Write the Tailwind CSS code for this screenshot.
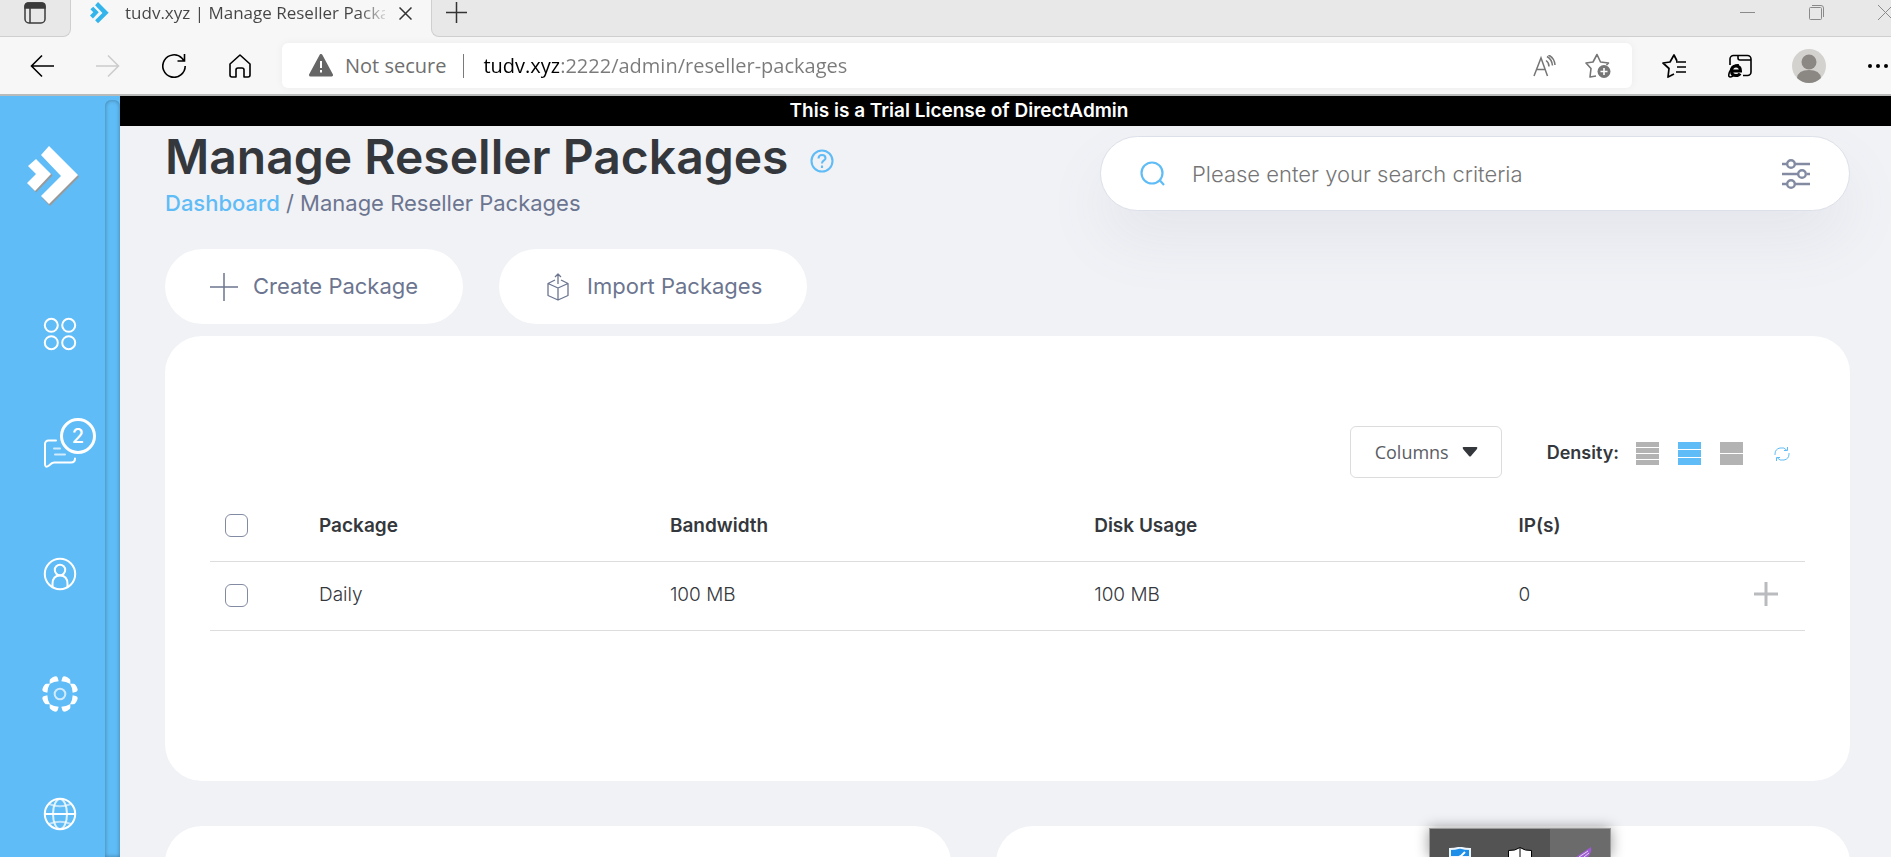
<!DOCTYPE html>
<html lang="en">
<head>
<meta charset="utf-8">
<meta name="viewport" content="width=device-width, initial-scale=1">
<title>tudv.xyz | Manage Reseller Packages</title>
<script src="https://cdn.jsdelivr.net/npm/@tailwindcss/browser@4"></script>
</head>
<body class="relative flex h-screen flex-col overflow-hidden bg-[#f1f2f6] font-['Inter',sans-serif] text-[#34383c]">

<svg class="hidden">
  <symbol id="chevrons" viewBox="0 0 52 60">
    <path d="M22 0 51 29 22 58 14 50 34 30 14 9ZM9 13 24 28 8 45 0 37 9 28 1 20Z"/>
  </symbol>
</svg>

<!-- Browser tabs -->
<header class="flex-none font-['Open_Sans',sans-serif]">
  <div class="flex h-[37px] items-stretch bg-[#f7f7f7]">
    <div class="flex w-[71px] justify-center rounded-br-lg border-r border-b border-[#cfcfcf] bg-[#e8e8e8] pt-[2px]">
      <button aria-label="Tab actions" class="h-[22px]">
        <svg class="size-[22px]" viewBox="0 0 22 22" fill="none" stroke="#3b3b3b" stroke-width="1.5"><rect x="1" y="1" width="20" height="20" rx="4"/><path d="M1 6V4a3 3 0 0 1 3-3h14a3 3 0 0 1 3 3v2Z" fill="#3b3b3b"/><path d="M6 6v15"/></svg>
      </button>
    </div>
    <div class="flex w-[360px] items-start pl-[19px]">
      <svg class="mt-[2px] h-[22px] w-[19px] flex-none" fill="#33b5ec"><use href="#chevrons"/></svg>
      <span class="ml-4 h-[26px] w-[260px] overflow-hidden bg-linear-to-r from-[#444] from-90% to-[#44444430] bg-clip-text text-[17px] leading-[26px] whitespace-nowrap text-transparent">tudv.xyz | Manage Reseller Packages</span>
      <button aria-label="Close tab" class="mt-[7px] ml-[14px]"><svg class="size-[13px]" viewBox="0 0 13 13" stroke="#333" stroke-width="1.5"><path d="m.5.5 12 12m0-12-12 12"/></svg></button>
    </div>
    <div class="flex flex-1 items-start rounded-bl-lg border-b border-l border-[#cfcfcf] bg-[#e8e8e8] pl-[14px]">
      <button aria-label="New tab" class="mt-[2px]"><svg class="size-[21px]" viewBox="0 0 21 21" stroke="#333" stroke-width="1.5"><path d="M10.500 0v21M0 10.500h21"/></svg></button>
      <div class="-mr-[2px] ml-auto flex items-center gap-[54px] pt-[5px]">
        <button aria-label="Minimize"><svg class="size-[15px]" viewBox="0 0 15 15" stroke="#8a8a8a"><path d="M0 7.500h15"/></svg></button>
        <button aria-label="Restore"><svg class="size-[15px]" viewBox="0 0 15 15" stroke="#8a8a8a" fill="none"><rect x=".5" y="2.500" width="12" height="12" rx="1"/><path d="M3 .5h9a2.500 2.500 0 0 1 2.500 2.500v9"/></svg></button>
        <button aria-label="Close window"><svg class="size-[15px]" viewBox="0 0 15 15" stroke="#8a8a8a"><path d="m0 0 15 15m0-15L0 15"/></svg></button>
      </div>
    </div>
  </div>

  <!-- Browser toolbar -->
  <div class="flex h-[59px] items-center border-b-2 border-[#b9bbbb] bg-[#f7f7f7] pl-[30px]">
    <div class="flex w-[252px] flex-none items-center gap-[42px]">
      <button aria-label="Back"><svg class="size-6" viewBox="0 0 24 24" fill="none" stroke="#000" stroke-width="1.6"><path d="M24 12H1.500M12 1.500 1.500 12 12 22.500"/></svg></button>
      <button aria-label="Forward"><svg class="size-6" viewBox="0 0 24 24" fill="none" stroke="#ccc" stroke-width="1.6"><path d="M0 12h22.500M12 1.500 22.500 12 12 22.500"/></svg></button>
      <button aria-label="Refresh"><svg class="size-6" viewBox="0 0 24 24" fill="none" stroke="#000" stroke-width="1.600"><path d="M23.200 12A11.200 11.200 0 1 1 20 4.200l2 2.500M22.500 0v7h-7"/></svg></button>
      <button aria-label="Home"><svg class="size-6" viewBox="0 0 24 24" fill="none" stroke="#000" stroke-width="1.600" stroke-linejoin="round"><path d="M2 10 12 1l10 9v11a2 2 0 0 1-2 2h-4v-7a2 2 0 0 0-2-2h-4a2 2 0 0 0-2 2v7H4a2 2 0 0 1-2-2Z"/></svg></button>
    </div>
    <div class="flex h-[45px] min-w-0 flex-1 items-center rounded-md bg-white pl-[27px] text-[20px] shadow-[0_0_8px_#0000000d]">
      <svg class="h-[23px] w-6 flex-none" viewBox="0 0 24 23"><path d="M12 1.500 22.500 21H1.500Z" fill="#666" stroke="#666" stroke-width="3" stroke-linejoin="round"/><path d="M12 7v7m0 2v2.500" stroke="#fff" stroke-width="2"/></svg>
      <span class="ml-3 flex-none text-[#6f6f6f]">Not secure</span>
      <span class="mr-[19px] ml-[17px] h-6 w-px flex-none bg-[#7a7a7a]"></span>
      <input type="text" aria-label="Address" value="tudv.xyz:2222/admin/reseller-packages" class="min-w-0 flex-1 bg-linear-to-r from-black from-[76px] to-[#7a7a7a] to-[76px] bg-clip-text text-transparent outline-none">
      <button aria-label="Read aloud"><svg class="h-[22px] w-[23px]" viewBox="0 0 23 22" fill="none" stroke="#767676" stroke-width="1.500"><path d="M1 21 8 3l6.500 18M3.500 14.500h9M13 5.500q3 2 3 6M14 1.500q5 3 5.500 9M15.500 0q6 3 6.500 10" /></svg></button>
      <button aria-label="Add to favorites" class="mr-5 ml-[29px]"><svg class="h-[26px] w-[27px]" viewBox="0 0 27 26" fill="none" stroke="#767676" stroke-width="1.600"><path d="m11 23-6 1 1-8.500L1 10l7-1 4-7.500L15.500 9l8 1-2 2" stroke-linejoin="round"/><circle cx="19" cy="18.500" r="6.500" fill="#767676" stroke="none"/><path d="M19 15v7m-3.500-3.500h7" stroke="#fff"/></svg></button>
    </div>
    <div class="flex flex-none items-center pl-[30px]">
      <button aria-label="Favorites"><svg class="h-6 w-[25px]" viewBox="0 0 25 24" fill="none" stroke="#000" stroke-width="1.700" stroke-linejoin="round"><path d="M14 8h10M15 13h9M14 18h10M12 20l-6 3 1-8.500L1 9l7-1 4-7 3 6"/></svg></button>
      <button aria-label="Internet Explorer mode" class="ml-[41px]"><svg class="size-6" viewBox="0 0 24 24" fill="none" stroke="#000" stroke-width="1.600"><path d="M2 11V5a3.500 3.500 0 0 1 3.500-3.500h14A3.500 3.500 0 0 1 23 5v13a3.500 3.500 0 0 1-3.500 3.500H15M10 1.500V4q0 2 2 2h11"/><path d="M4 17h8.500q0-5-4.500-5t-4.500 5q0 4.500 4.500 4.500 3 0 4-2" stroke-width="3"/><path d="M11 11Q5 10 1.500 18-1 25 5 22"/></svg></button>
      <button aria-label="Profile" class="ml-[40px]"><svg class="size-[34px]" viewBox="0 0 34 34"><circle cx="17" cy="17" r="17" fill="#d4d2cf"/><circle cx="17" cy="13" r="7.500" fill="#8b8783"/><path d="M5 29q1-8 12-8t12 8a17 17 0 0 1-24 0Z" fill="#8b8783"/></svg></button>
      <button aria-label="Settings and more" class="ml-[41px]"><svg class="h-5 w-[24px]" viewBox="0 0 24 20"><circle cx="3" cy="10" r="2"/><circle cx="11" cy="10" r="2"/><circle cx="19" cy="10" r="2"/></svg></button>
    </div>
  </div>
</header>

<div class="flex min-h-0 flex-1">
  <!-- Sidebar -->
  <aside class="flex w-[120px] flex-none bg-[#60bcf6] text-white">
    <nav class="flex w-[105px] flex-col items-start overflow-hidden pt-[50px]">
      <a href="#" aria-label="DirectAdmin" class="ml-[27px]">
        <svg class="h-[60px] w-[52px]" viewBox="0 0 52 60"><path fill="#999" d="m50 28 2 3-29 29-8-8 8-2ZM23.500 27l2 2.500L9 46.500 2 39Z"/><use href="#chevrons" fill="#fff"/></svg>
      </a>
      <div class="ml-[42px] flex flex-col gap-[84px] pt-[110px]">
        <a href="#" aria-label="Menu"><svg class="size-9" viewBox="0 0 36 36" fill="none" stroke="currentColor" stroke-width="2"><circle cx="9.300" cy="9.300" r="6.500"/><circle cx="26.700" cy="9.300" r="6.500"/><circle cx="9.300" cy="26.700" r="6.500"/><circle cx="26.700" cy="26.700" r="6.500"/></svg></a>
        <a href="#" aria-label="Messages, 2 unread" class="relative">
          <svg class="size-9" viewBox="0 0 36 36" fill="none" stroke="currentColor" stroke-width="2" stroke-linecap="round"><path d="M14 4.500H6.500A3.500 3.500 0 0 0 3 8v20q0 4.500 4 1.500 3-3 5-3h17q4 0 4-4"/><path d="M12 12.500h6M13 18.500h10" opacity=".7"/></svg>
          <span class="absolute -top-[18px] left-[18px] flex size-9 items-center justify-center rounded-full border-[3px] border-white bg-[#60bcf6] text-[20px] font-medium">2</span>
        </a>
        <a href="#" aria-label="Account"><svg class="size-9" viewBox="0 0 36 36" fill="none" stroke="currentColor" stroke-width="2"><circle cx="18" cy="18" r="15.200"/><circle cx="18" cy="14" r="5.200"/><path d="M10.500 31v-3q0-8.500 7.500-8.500t7.500 8.500v3"/></svg></a>
        <a href="#" aria-label="Settings"><svg class="size-9" viewBox="-54 -54 108 108" fill="currentColor">
          <g id="cog-quarter"><path d="M4-38 7-49Q8-52 12-53 16-53 22-50L28-46Q31-44 31-40V-30Q18-38 4-38Z"/><path transform="matrix(0 -1 -1 0 0 0)" d="M4-38 7-49Q8-52 12-53 16-53 22-50L28-46Q31-44 31-40V-30Q18-38 4-38Z"/></g>
          <use href="#cog-quarter" transform="rotate(90)"/><use href="#cog-quarter" transform="rotate(180)"/><use href="#cog-quarter" transform="rotate(270)"/>
          <circle r="16" fill="none" stroke="currentColor" stroke-width="6" opacity=".7"/></svg></a>
        <a href="#" aria-label="Language"><svg class="size-9" viewBox="0 0 36 36" fill="none" stroke="currentColor" stroke-width="2"><circle cx="18" cy="18" r="15.200"/><path d="M3 18h30"/><ellipse cx="18" cy="18" rx="7" ry="15" opacity=".8"/><path d="M7 8q11 4.500 22 0M7 28q11-4.500 22 0" opacity=".6"/></svg></a>
      </div>
    </nav>
    <div class="mt-1 flex-1 rounded-t-md shadow-[inset_0_0_4px_#00000059]"></div>
  </aside>

  <main class="flex min-w-0 flex-1 flex-col overflow-hidden">
    <p class="h-[30px] flex-none bg-black pr-[93px] text-center text-[19px] leading-[30px] font-semibold text-white">This is a Trial License of DirectAdmin</p>

    <div class="flex flex-col pr-[41px] pl-[45px]">
      <div class="flex items-start justify-between">
        <div>
          <div class="flex items-center gap-[22px]">
            <h1 class="text-[48px] leading-[62px] font-semibold">Manage Reseller Packages</h1>
            <button aria-label="Help" class="mt-2"><svg class="size-6" viewBox="0 0 24 24" fill="none" stroke="#60bcf6" stroke-width="2.100"><circle cx="12" cy="12" r="10.500"/><path d="M8.500 9.500q0-3.500 3.500-3.500t3.500 3.200c0 2.300-3.500 2.300-3.500 5.300"/><path d="M12 16.500V19"/></svg></button>
          </div>
          <nav aria-label="Breadcrumb" class="text-[22px] leading-[30px] text-[#6c7590]"><a href="#" class="font-medium text-[#60bcf6]">Dashboard</a> / Manage Reseller Packages</nav>
        </div>
        <form class="mt-[10px] flex h-[75px] w-[750px] items-center rounded-full border border-[#dce0e9] bg-white pr-[38px] pl-[39px] shadow-[0_30px_60px_#6c759017]">
          <svg class="h-[26px] w-[25px] flex-none" viewBox="0 0 25 26" fill="none" stroke="#60bcf6" stroke-width="2.200"><circle cx="12" cy="12" r="10.500"/><path d="m19.500 19 4.500 5"/></svg>
          <input type="text" aria-label="Search" placeholder="Please enter your search criteria" class="ml-[27px] h-10 min-w-0 flex-1 text-[22px] font-light outline-none placeholder:text-[#757575]">
          <button type="button" aria-label="Search filters"><svg class="block size-[30px]" viewBox="0 0 30 30" fill="none" stroke="#838ba3" stroke-width="2.400"><path d="M1 5h5m8 0h15M1 15h16m9 0h3M1 25h5m8 0h15"/><circle cx="10" cy="5" r="3.800"/><circle cx="21" cy="15" r="3.800"/><circle cx="10" cy="25" r="3.800"/></svg></button>
        </form>
      </div>

      <div class="mt-[31px] flex gap-9 text-[22px] text-[#6c7590]">
        <button class="flex h-[75px] items-center gap-[15px] rounded-full bg-white px-[45px]"><svg class="size-7" viewBox="0 0 28 28" stroke="currentColor" stroke-width="1.500"><path d="M14 0v28M0 14h28"/></svg>Create Package</button>
        <button class="flex h-[75px] items-center gap-[15px] rounded-full bg-white px-[45px]"><svg class="size-7" viewBox="0 0 28 28" fill="none" stroke="currentColor" stroke-width="1.300" stroke-linejoin="round"><path d="M11 7 4 10.500v12L14 27l10-4.500v-12L17 7M4 10.500 14 15l10-4.500M14 15v12M14 11V1m-3 3 3-3 3 3"/></svg>Import Packages</button>
      </div>

      <section class="mt-3 flex flex-col rounded-[37px] bg-white px-[45px] pt-[90px] pb-[150px]">
        <div class="flex items-center justify-end pr-[15px]">
          <div class="relative h-[52px] w-[152px] font-['Open_Sans',sans-serif]">
            <select aria-label="Columns" class="size-full appearance-none rounded-md border border-[#dcdcde] bg-white pl-6 text-[18px] text-[#5a5d63]"><option>Columns</option></select>
            <svg class="pointer-events-none absolute top-[21px] right-6 h-[10px] w-4" viewBox="0 0 16 10" fill="#34383c"><path d="M1.500 0h13Q16 0 15 2L9 9Q8 10 7 9L1 2Q0 0 1.500 0Z"/></svg>
          </div>
          <span class="ml-[45px] text-[18px] font-semibold">Density:</span>
          <div class="ml-[17px] flex gap-[19px] pt-[3px] text-[#b3b3b3]">
            <button aria-label="Compact density"><svg class="block size-[23px]" viewBox="0 0 23 23" fill="currentColor"><path d="M0 0h23v5H0zM0 6h23v5H0zM0 12h23v5H0zM0 18h23v5H0z"/></svg></button>
            <button aria-label="Normal density" class="text-[#60bcf6]"><svg class="block size-[23px]" viewBox="0 0 23 23" fill="currentColor"><path d="M0 0h23v7H0zM0 8h23v7H0zM0 16h23v7H0z"/></svg></button>
            <button aria-label="Comfortable density"><svg class="block size-[23px]" viewBox="0 0 23 23" fill="currentColor"><path d="M0 0h23v11H0zM0 12h23v11H0z"/></svg></button>
          </div>
          <button aria-label="Reload table" class="mt-1 ml-[31px]"><svg class="block size-4" viewBox="0 0 16 16" fill="none" stroke="#60bcf6"><path d="M1 9V8Q1 3 6 2h4l3 2.500M13.500 1v3.500H10M15 7v1q0 5-5 6H6l-3-2.500M2.500 15v-3.500H6"/></svg></button>
        </div>

        <table class="mt-[13px] w-full table-fixed text-left text-[19px]">
          <colgroup><col class="w-[94px]"><col class="w-[22%]"><col class="w-[26.600%]"><col class="w-[26.600%]"><col></colgroup>
          <thead>
            <tr class="h-[70px] border-b border-[#dcdddf]">
              <th class="pl-[15px]"><input type="checkbox" aria-label="Select all packages" class="block size-[23px] appearance-none rounded-[6px] border border-[#838ba3] bg-white"></th>
              <th class="pl-[15px] font-semibold">Package</th>
              <th class="pl-[15px] font-semibold">Bandwidth</th>
              <th class="pl-[15px] font-semibold">Disk Usage</th>
              <th class="pl-[15px] font-semibold">IP(s)</th>
            </tr>
          </thead>
          <tbody class="font-light">
            <tr class="h-[69px] border-b border-[#dcdddf]">
              <td class="pl-[15px]"><input type="checkbox" aria-label="Select Daily" class="block size-[23px] appearance-none rounded-[6px] border border-[#838ba3] bg-white"></td>
              <td class="pl-[15px]">Daily</td>
              <td class="pl-[15px]">100 MB</td>
              <td class="pl-[15px]">100 MB</td>
              <td class="pr-[27px] pl-[15px]"><div class="flex items-center justify-between">0<button aria-label="Expand row" class="pb-1"><svg class="block size-6" viewBox="0 0 24 24" stroke="#b9bbbe" stroke-width="3"><path d="M12 0v24M0 12h24"/></svg></button></div></td>
            </tr>
          </tbody>
        </table>
      </section>

      <div class="mt-[45px] flex gap-[45px]">
        <section class="h-40 flex-[786] rounded-[37px] bg-white"></section>
        <section class="h-40 flex-[854] rounded-[37px] bg-white"></section>
      </div>
    </div>
  </main>
</div>

<!-- System tray flyout, cut off by the bottom of the screen -->
<div class="absolute right-[280px] bottom-0 flex h-[29px] w-[182px] overflow-visible border border-b-0 border-[#9a9a9a] bg-[#535353] shadow-[0_0_14px_#00000066]">
  <div class="flex flex-1 items-end justify-center"><svg class="h-[10px] w-[22px]" viewBox="0 0 22 10"><path d="M1 10V2q5 0 10-1.500Q16 2 21 2v8Z" fill="#1e8fe8" stroke="#eef6fd" stroke-width="2"/><path d="m10 10 2-1 4-4" stroke="#fff" stroke-width="2" fill="none"/></svg></div>
  <div class="flex flex-1 items-end justify-center"><svg class="h-[10px] w-6" viewBox="0 0 24 10"><path d="M.5 10V3.500Q7 4 12 .5q5 3.500 11.500 3V10" fill="#fff" stroke="#000"/><path d="M12 1v9" stroke="#000"/></svg></div>
  <div class="flex flex-1 items-end justify-center bg-[#6b6b6b]"><svg class="ml-2 h-[10px] w-4" viewBox="0 0 16 10"><path d="M0 10Q6 6 15 0q1 5-3 10Z" fill="#a259d9"/><path d="M3 10 12 4M8 10l5-4" stroke="#ddd"/></svg></div>
</div>
</body>
</html>
